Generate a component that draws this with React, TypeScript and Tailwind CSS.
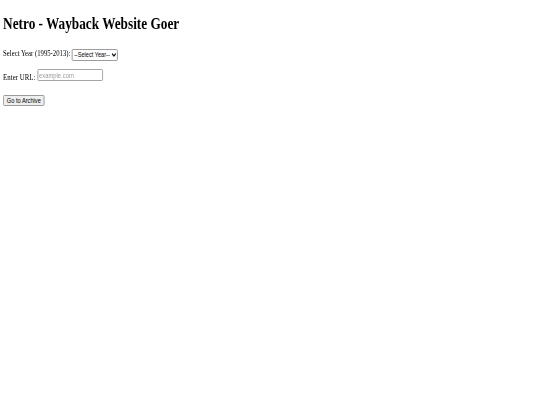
import { useState } from "react";

const years = Array.from({ length: 19 }, (_, i) => String(1995 + i));

export default function App() {
  const [year, setYear] = useState("");
  const [url, setUrl] = useState("");

  function goToArchive() {
    if (!year || !url) return;
    const target = `https://web.archive.org/web/${year}0101000000*/${url}`;
    console.log(target);
  }

  return (
    <div className="min-h-screen bg-white text-black">
      <div className="origin-top-left scale-x-[0.78] pl-[4px] font-['Liberation_Serif','Times_New_Roman',serif]">
        <h1 className="mt-[14px] text-[17px] leading-[19px] font-bold">Netro - Wayback Website Goer</h1>

        <div className="mt-[15.7px] flex items-start">
          <label htmlFor="year" className="text-[8.6px] leading-[8px] whitespace-pre">
            {"Select Year (1995-2013): "}
          </label>
          <div className="relative">
            <select
              id="year"
              value={year}
              onChange={(e) => setYear(e.target.value)}
              className="block h-[12px] w-[59px] appearance-none rounded-[1.5px] border border-[#8f8f8f] bg-white pr-[9px] pl-[1.5px] font-['Liberation_Sans',Arial,sans-serif] text-[7.2px] leading-[10px] text-black outline-none"
            >
              <option value="">--Select Year--</option>
              {years.map((y) => (
                <option key={y} value={y}>
                  {y}
                </option>
              ))}
            </select>
            <svg
              viewBox="0 0 6 4"
              className="pointer-events-none absolute top-[4px] right-[2.5px] h-[4px] w-[6px]"
              fill="none"
              stroke="#111"
              strokeWidth="1.4"
              strokeLinecap="round"
              strokeLinejoin="round"
            >
              <path d="M1 1 L3 3 L5 1" />
            </svg>
          </div>
        </div>

        <div className="mt-[8.8px] flex items-start">
          <label htmlFor="url" className="mt-[3.2px] text-[8.8px] leading-[8px] whitespace-pre">
            {"Enter URL: "}
          </label>
          <input
            id="url"
            type="text"
            value={url}
            onChange={(e) => setUrl(e.target.value)}
            placeholder="example.com"
            className="block h-[11.5px] w-[84.6px] rounded-[1.5px] border border-[#9a9a9a] bg-white px-[1.5px] font-['Liberation_Sans',Arial,sans-serif] text-[7.5px] leading-[9px] text-black outline-none placeholder:text-[#9c9c9c]"
          />
        </div>

        <div className="mt-[14.3px] flex">
          <button
            type="button"
            onClick={goToArchive}
            className="h-[10.8px] w-[53px] rounded-[1.5px] border border-[#8f8f8f] bg-[#efefef] font-['Liberation_Sans',Arial,sans-serif] text-[7.3px] leading-[8px] text-black"
          >
            Go to Archive
          </button>
        </div>
      </div>
    </div>
  );
}
